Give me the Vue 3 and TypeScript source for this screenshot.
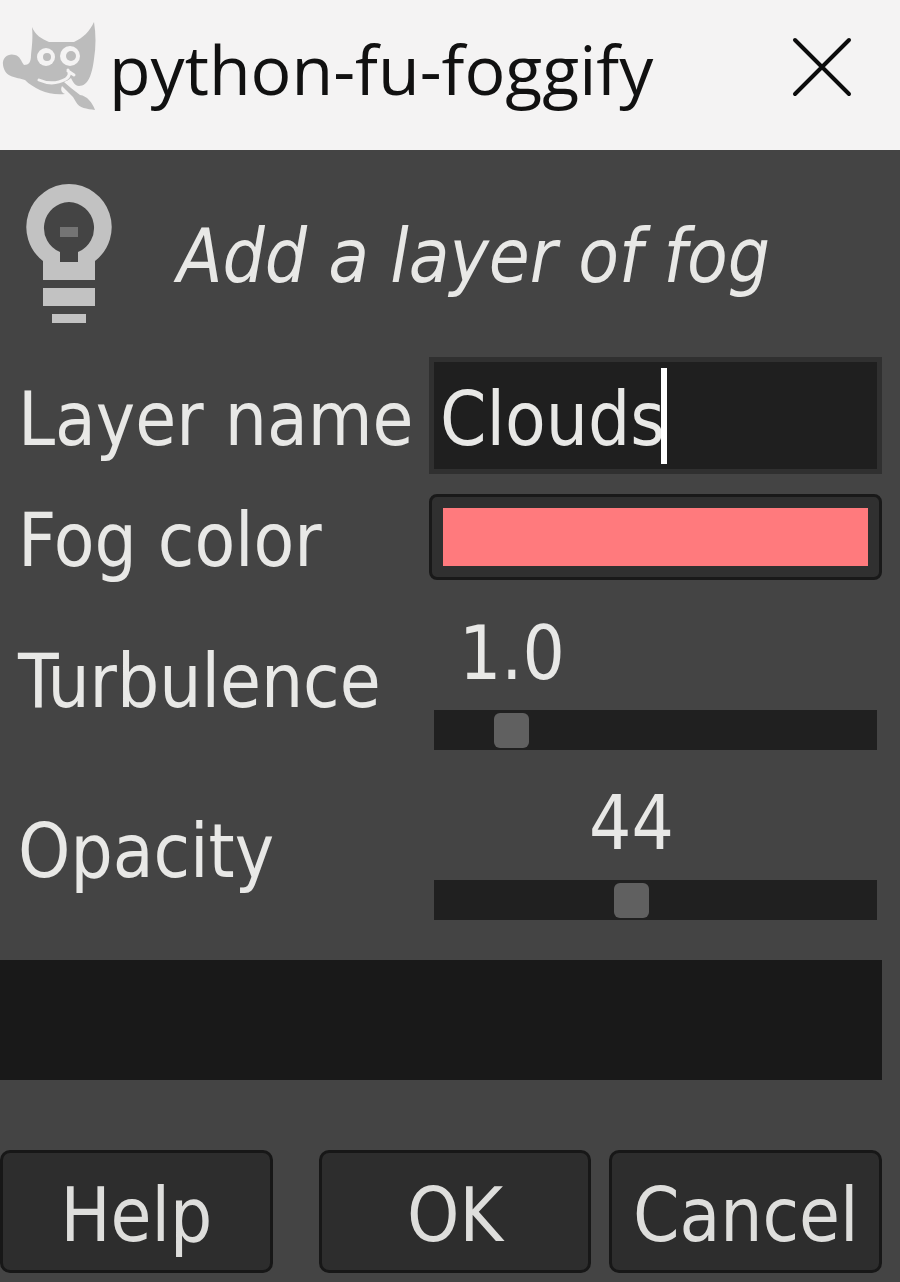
<script setup lang="ts">
import { computed, ref } from 'vue'

const layerName = ref('Clouds')
const fogColor = ref('#ff7a7d')

const turbulence = ref(1)
const turbulenceMax = 7
const opacity = ref(44)
const opacityMax = 100

const valueOffset = (value: number, max: number) => ({
  marginLeft: `calc((100% - 35px) * ${value / max})`,
})

const turbulenceStyle = computed(() => valueOffset(Number(turbulence.value), turbulenceMax))
const opacityStyle = computed(() => valueOffset(Number(opacity.value), opacityMax))
</script>

<template>
  <main class="dialog">
    <header class="titlebar">
      <svg class="mascot" viewBox="0 0 100 100" aria-hidden="true">
        <path
          fill="#bcbcbc"
          d="M32 7 C35 15 42 19 49 22 L74 22 C83 18 90 11 94 2 C96 14 96 27 94 39 C92 55 88 66 79 66 C75 66 73 62 71 58 C69 60 66 61 64 62 L71 68 L80 75 C87 76 92 82 95 90 C87 89 79 88 76 82 L73 77 L62 66 C60 70 62 73 65 74 C50 76 34 69 25 60 C16 57 5 58 3 45 C2 37 9 33 15 35 C20 36 21 41 24 45 C29 45 31 42 31 35 C32 26 33 18 32 7 Z"
        />
        <path fill="none" stroke="#f4f3f3" stroke-width="3" stroke-linecap="round" d="M39 60 C48 64 57 64 66 59 C70 56 70 53 68 50 M68 51 L74 55" />
        <circle cx="46" cy="37" r="9" fill="#f4f3f3" />
        <circle cx="70" cy="36" r="10" fill="#f4f3f3" />
        <circle cx="47" cy="37" r="4" fill="#bcbcbc" />
        <circle cx="71" cy="36" r="5" fill="#bcbcbc" />
      </svg>
      <h1 class="title">python-fu-foggify</h1>
      <button class="close" type="button" aria-label="Close">
        <svg viewBox="0 0 60 60" aria-hidden="true">
          <path d="M3 3 L57 57 M57 3 L3 57" fill="none" stroke="#0c0c0c" stroke-width="4" stroke-linecap="round" />
        </svg>
      </button>
    </header>

    <section class="hint">
      <svg class="bulb" viewBox="0 0 88 140" aria-hidden="true">
        <path
          fill="#c2c2c2"
          fill-rule="evenodd"
          d="M44 0 A43 43 0 0 1 70 77 V96 H18 V77 A43 43 0 0 1 44 0 Z M44 18 A26 26 0 0 0 35 68 V78 H53 V68 A26 26 0 0 0 44 18 Z"
        />
        <path fill="#747474" d="M35 43 H53 V53 H35 Z" />
        <path fill="#c2c2c2" d="M18 104 H70 V122 H18 Z M27 130 H61 V139 H27 Z" />
      </svg>
      <p class="hint-text">Add a layer of fog</p>
    </section>

    <form class="fields" @submit.prevent>
      <label for="layer-name">Layer name</label>
      <div class="entry">
        <input id="layer-name" v-model="layerName" class="entry-input" type="text" />
        <span class="caret" aria-hidden="true"></span>
      </div>

      <label for="fog-color">Fog color</label>
      <input id="fog-color" v-model="fogColor" class="swatch" type="color" />

      <label class="scale-label" for="turbulence">Turbulence</label>
      <div class="scale">
        <div class="value-row">
          <output class="value" for="turbulence" :style="turbulenceStyle">{{ Number(turbulence).toFixed(1) }}</output>
        </div>
        <input id="turbulence" v-model="turbulence" class="slider" type="range" min="0" :max="turbulenceMax" step="0.1" />
      </div>

      <label class="scale-label" for="opacity">Opacity</label>
      <div class="scale">
        <div class="value-row">
          <output class="value" for="opacity" :style="opacityStyle">{{ opacity }}</output>
        </div>
        <input id="opacity" v-model="opacity" class="slider" type="range" min="0" :max="opacityMax" step="1" />
      </div>
    </form>

    <div class="progress" role="progressbar" aria-label="Progress"></div>

    <footer class="actions">
      <button class="action help" type="button">Help</button>
      <button class="action" type="button">OK</button>
      <button class="action" type="button">Cancel</button>
    </footer>
  </main>
</template>

<style>
body {
  margin: 0;
  background: #444444;
}
</style>

<style scoped>
.dialog {
  box-sizing: border-box;
  min-height: 100vh;
  background: #444444;
  color: #e8e8e6;
  font-family: "DejaVu Sans Condensed", "DejaVu Sans", "Noto Sans", sans-serif;
  font-size: 74px;
  line-height: 90px;
}

.titlebar {
  display: flex;
  align-items: center;
  height: 150px;
  padding: 0 46px 0 0;
  box-sizing: border-box;
  background: #f4f3f3;
  color: #111111;
}

.mascot {
  width: 100px;
  height: 100px;
  flex: none;
  margin-bottom: 10px;
}

.title {
  flex: 1;
  margin: 0 0 12px 9px;
  font-family: "Open Sans", "Noto Sans", sans-serif;
  font-size: 68px;
  font-weight: 400;
  white-space: nowrap;
}

.close {
  flex: none;
  width: 64px;
  height: 64px;
  margin-bottom: 16px;
  padding: 2px;
  border: 0;
  background: transparent;
}

.close svg {
  display: block;
  width: 60px;
  height: 60px;
}

.hint {
  display: flex;
  align-items: center;
  gap: 52px;
  height: 207px;
  padding-left: 25px;
}

.bulb {
  flex: none;
  width: 88px;
  height: 140px;
}

.hint-text {
  margin: 0;
  padding: 4px 0 0 12px;
  overflow: hidden;
  font-style: italic;
  white-space: nowrap;
}

.fields {
  display: grid;
  grid-template-columns: 411px 1fr;
  row-gap: 20px;
  align-items: center;
  padding: 0 18px;
}

.fields label {
  padding-top: 6px;
  line-height: 80px;
  white-space: nowrap;
}

.fields .scale-label {
  padding-top: 12px;
}

.entry {
  display: flex;
  align-items: center;
  box-sizing: border-box;
  min-width: 0;
  height: 117px;
  padding-left: 6px;
  border: 5px solid #303030;
  background: #1f1f1f;
}

.entry-input {
  field-sizing: content;
  min-width: 0;
  padding: 6px 0 0;
  border: 0;
  outline: 0;
  background: transparent;
  color: inherit;
  font: inherit;
}

.caret {
  flex: none;
  width: 6px;
  height: 96px;
  margin-left: -4px;
  background: #ffffff;
}

.swatch {
  box-sizing: border-box;
  width: 100%;
  height: 86px;
  padding: 11px;
  border: 3px solid #191919;
  border-radius: 8px;
  background: #303030;
}

.swatch::-webkit-color-swatch-wrapper {
  padding: 0;
}

.swatch::-webkit-color-swatch {
  border: 0;
  border-radius: 0;
}

.scale {
  display: flex;
  flex-direction: column;
  min-width: 0;
  padding: 0 5px;
}

.value-row {
  padding: 8px 3px 12px;
}

.value {
  display: flex;
  justify-content: center;
  width: 35px;
  white-space: nowrap;
}

.slider {
  appearance: none;
  box-sizing: border-box;
  width: 100%;
  height: 40px;
  margin: 0;
  padding: 0 3px;
  background: #202020;
}

.slider::-webkit-slider-thumb {
  appearance: none;
  width: 35px;
  height: 35px;
  border: 0;
  border-radius: 6px;
  background: #606060;
}

.progress {
  height: 120px;
  margin: 40px 18px 70px 0;
  background: #191919;
}

.actions {
  display: flex;
  gap: 18px;
  padding: 0 18px 9px 0;
}

.action {
  flex: 1 1 0;
  min-width: 0;
  height: 123px;
  padding: 6px 0 0;
  border: 3px solid #171717;
  border-radius: 10px;
  background: #2d2d2d;
  color: #dededc;
  font: inherit;
}

.help {
  margin-right: 28px;
}
</style>
